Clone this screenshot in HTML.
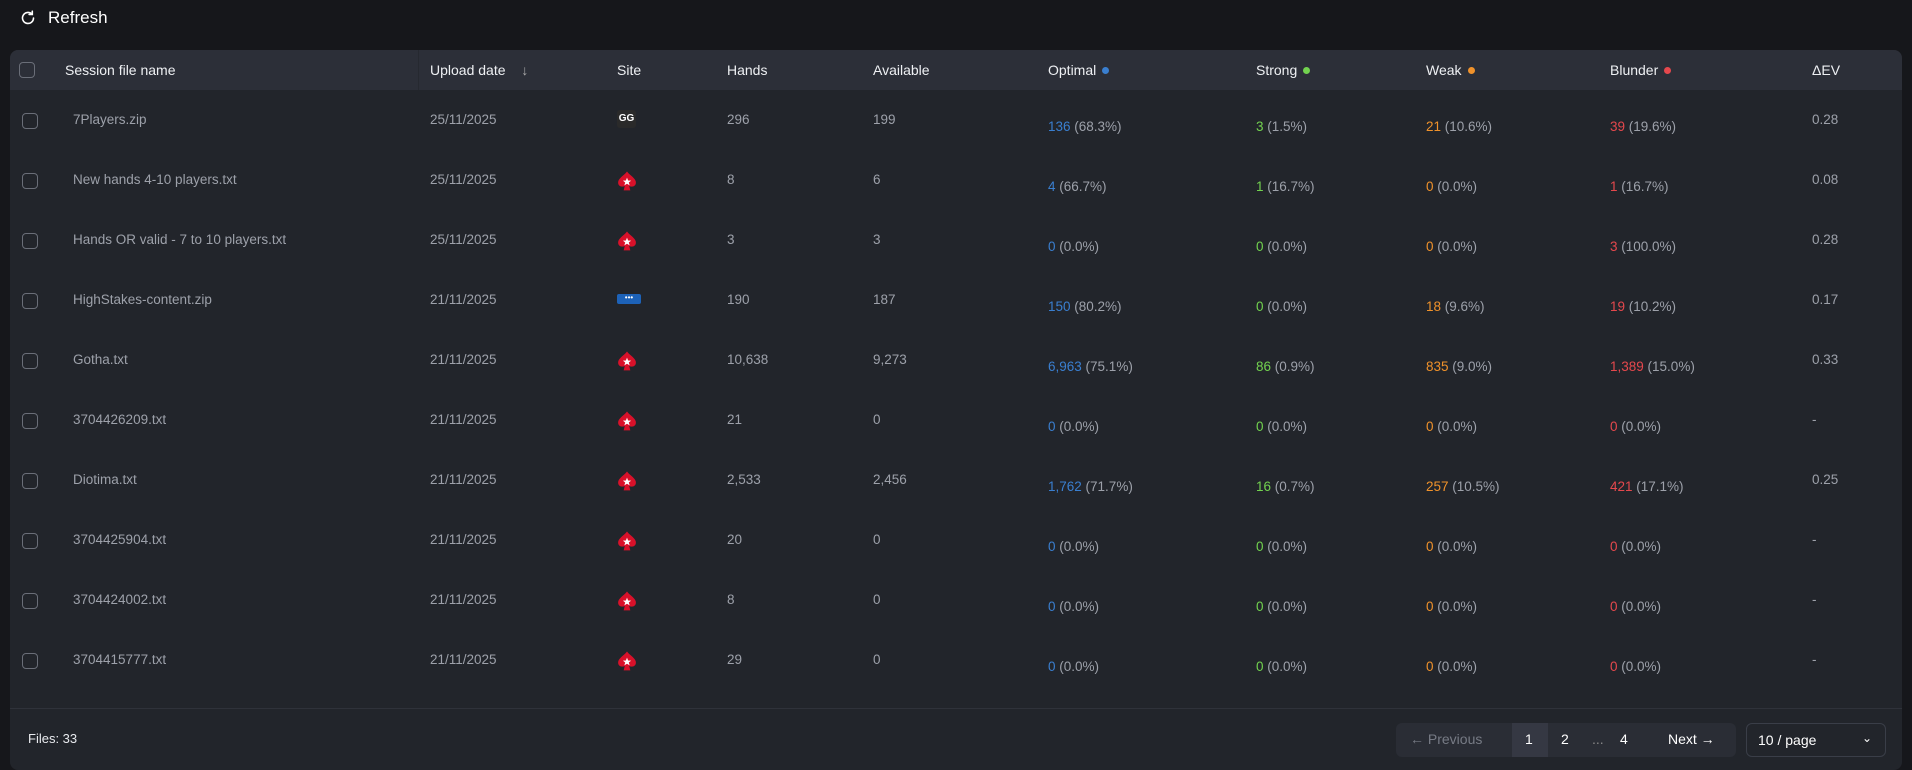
<!DOCTYPE html>
<html><head><meta charset="utf-8"><style>
*{box-sizing:border-box;margin:0;padding:0}
body{width:1912px;height:758px;background:#16171b;font-family:"Liberation Sans",sans-serif;color:#9da1aa;overflow:hidden;position:relative}
.abs{position:absolute;white-space:nowrap}
#refresh{left:20px;top:7px;height:22px;display:flex;align-items:center;gap:12px;color:#fff;font-size:17px}
#box{position:absolute;left:10px;top:50px;width:1892px;height:720px;background:#22252b;border-radius:8px;overflow:hidden}
#head{position:absolute;left:0;top:0;width:100%;height:40px;background:#2c2f38;color:#eef0f3;font-size:14px}
.cb{position:absolute;width:16px;height:16px;border:1.5px solid #6a6e78;border-radius:4px}
.row{position:absolute;left:0;width:100%;height:60px;font-size:13.5px}
.dot{display:inline-block;width:7px;height:7px;border-radius:50%;margin-left:6px;vertical-align:1px}
.b{color:#3a7fd0}.g{color:#72d24f}.o{color:#f0922b}.r{color:#e5484d}
#foot{position:absolute;left:0;top:658px;width:100%;border-top:1px solid #2f323a;height:62px}
</style></head><body>
<div class="abs" id="refresh"><svg width="16" height="16" viewBox="0 0 16 16" fill="none" stroke="#fff" stroke-width="1.6" stroke-linecap="round"><path d="M13.5 8a5.5 5.5 0 1 1-1.8-4.1"/><path d="M12.3 1.2v3.2H9.1"/></svg>Refresh</div>
<div id="box">
<div id="head">
<div class="cb" style="left:9px;top:12px"></div>
<div style="position:absolute;left:408px;top:0;width:1px;height:40px;background:#262930"></div>
<div class="abs" style="left:55px;top:12px">Session file name</div>
<div class="abs" style="left:420px;top:12px">Upload date <span style="margin-left:12px;color:#aaa">↓</span></div>
<div class="abs" style="left:607px;top:12px">Site</div>
<div class="abs" style="left:717px;top:12px">Hands</div>
<div class="abs" style="left:863px;top:12px">Available</div>
<div class="abs" style="left:1038px;top:12px">Optimal<span class="dot" style="background:#3a7fd0"></span></div>
<div class="abs" style="left:1246px;top:12px">Strong<span class="dot" style="background:#72d24f"></span></div>
<div class="abs" style="left:1416px;top:12px">Weak<span class="dot" style="background:#f0922b"></span></div>
<div class="abs" style="left:1600px;top:12px">Blunder<span class="dot" style="background:#e5484d"></span></div>
<div class="abs" style="left:1802px;top:12px">ΔEV</div>
</div>
<div id="rows"></div>
<div id="foot">
<div class="abs" style="left:18px;top:22px;color:#e8eaee;font-size:13px">Files: 33</div>
<div class="abs" style="left:1386px;top:14px;width:340px;height:34px;background:#2a2d35;border-radius:6px;font-size:14px;color:#fff">
<span class="abs" style="left:14px;top:8px;color:#777b85">← Previous</span>
<span class="abs" style="left:116px;top:0;width:36px;height:34px;background:#353843"></span>
<span class="abs" style="left:129px;top:8px">1</span>
<span class="abs" style="left:165px;top:8px">2</span>
<span class="abs" style="left:196px;top:8px;color:#888">...</span>
<span class="abs" style="left:224px;top:8px">4</span>
<span class="abs" style="left:272px;top:8px">Next →</span>
</div>
<div class="abs" style="left:1736px;top:14px;width:140px;height:34px;border:1px solid #3a3e48;border-radius:6px;background:#22252b;font-size:14px;color:#fff">
<span class="abs" style="left:11px;top:8px">10 / page</span><span class="abs" style="left:115px;top:7px;font-size:12px">⌄</span></div>
</div>
</div>
<script>
const gg='<div style="width:19px;height:18px;background:#2a2a2a;border-radius:3px;color:#fff;font-size:10px;font-weight:bold;text-align:center;line-height:18px">GG</div>';
const ps='<svg width="20" height="23" viewBox="0 0 18 20"><path d="M9 1C6 5 1 7 1 11c0 3 3 4.5 6 3L6 18h6l-1-4c3 1.5 6 0 6-3 0-4-5-6-8-10z" fill="#d8112a"/><path d="M9 6.5l1 2.6 2.7.1-2.1 1.7.8 2.6L9 12l-2.4 1.5.8-2.6-2.1-1.7 2.7-.1z" fill="#fff"/></svg>';
const hs='<div style="width:24px;height:10px;margin-top:4px;background:#1d62b8;border-radius:2px;color:#fff;font-size:8px;line-height:8px;text-align:center">•••</div>';
const d=[["7Players.zip","25/11/2025",gg,"296","199",["136","68.3%"],["3","1.5%"],["21","10.6%"],["39","19.6%"],"0.28"],
["New hands 4-10 players.txt","25/11/2025",ps,"8","6",["4","66.7%"],["1","16.7%"],["0","0.0%"],["1","16.7%"],"0.08"],
["Hands OR valid - 7 to 10 players.txt","25/11/2025",ps,"3","3",["0","0.0%"],["0","0.0%"],["0","0.0%"],["3","100.0%"],"0.28"],
["HighStakes-content.zip","21/11/2025",hs,"190","187",["150","80.2%"],["0","0.0%"],["18","9.6%"],["19","10.2%"],"0.17"],
["Gotha.txt","21/11/2025",ps,"10,638","9,273",["6,963","75.1%"],["86","0.9%"],["835","9.0%"],["1,389","15.0%"],"0.33"],
["3704426209.txt","21/11/2025",ps,"21","0",["0","0.0%"],["0","0.0%"],["0","0.0%"],["0","0.0%"],"-"],
["Diotima.txt","21/11/2025",ps,"2,533","2,456",["1,762","71.7%"],["16","0.7%"],["257","10.5%"],["421","17.1%"],"0.25"],
["3704425904.txt","21/11/2025",ps,"20","0",["0","0.0%"],["0","0.0%"],["0","0.0%"],["0","0.0%"],"-"],
["3704424002.txt","21/11/2025",ps,"8","0",["0","0.0%"],["0","0.0%"],["0","0.0%"],["0","0.0%"],"-"],
["3704415777.txt","21/11/2025",ps,"29","0",["0","0.0%"],["0","0.0%"],["0","0.0%"],["0","0.0%"],"-"]];
let h='';d.forEach((r,i)=>{const t=41+i*60;const q=(x,c,v,y)=>`<div class="abs" style="left:${x}px;top:${y}px"><span class="${c}">${v[0]}</span> (${v[1]})</div>`;
h+=`<div class="row" style="top:${t}px"><div class="cb" style="left:12px;top:22px"></div>
<div class="abs" style="left:63px;top:21px">${r[0]}</div><div class="abs" style="left:420px;top:21px">${r[1]}</div>
<div class="abs" style="left:607px;top:19px">${r[2]}</div><div class="abs" style="left:717px;top:21px">${r[3]}</div><div class="abs" style="left:863px;top:21px">${r[4]}</div>
${q(1038,'b',r[5],28)}${q(1246,'g',r[6],28)}${q(1416,'o',r[7],28)}${q(1600,'r',r[8],28)}<div class="abs" style="left:1802px;top:21px">${r[9]}</div></div>`});
document.getElementById('rows').innerHTML=h;
</script>
</body></html>
